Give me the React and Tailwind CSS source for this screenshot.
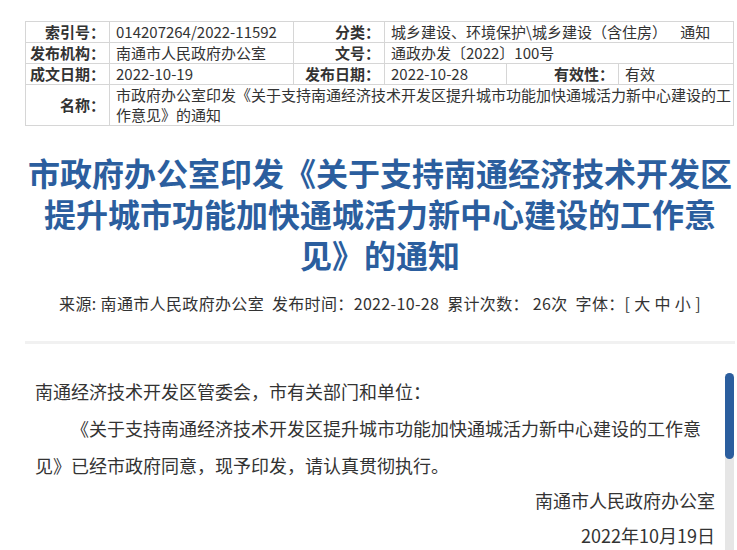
const labelCls = "text-right font-bold pr-[4px] pl-[4px] whitespace-nowrap";
const valueCls = "pl-[6px] pr-[4px]";
const cellBorder = "border border-[#d6d6d6]";

function InfoTable() {
  return (
    <table className="w-[708px] table-fixed border-collapse text-[15px] leading-[20px] text-[#333]">
      <colgroup>
        <col className="w-[84px]" />
        <col className="w-[184px]" />
        <col className="w-[91px]" />
        <col className="w-[122px]" />
        <col className="w-[112px]" />
        <col className="w-[115px]" />
      </colgroup>
      <tbody>
        <tr className="h-[21px]">
          <td className={`${cellBorder} ${labelCls}`}>索引号：</td>
          <td className={`${cellBorder} ${valueCls}`}>014207264/2022-11592</td>
          <td className={`${cellBorder} ${labelCls}`}>分类：</td>
          <td colSpan={3} className={`${cellBorder} ${valueCls} whitespace-nowrap`}>
            城乡建设、环境保护\城乡建设（含住房）&nbsp;&nbsp;&nbsp;&nbsp;通知
          </td>
        </tr>
        <tr className="h-[21px]">
          <td className={`${cellBorder} ${labelCls}`}>发布机构：</td>
          <td className={`${cellBorder} ${valueCls}`}>南通市人民政府办公室</td>
          <td className={`${cellBorder} ${labelCls}`}>文号：</td>
          <td colSpan={3} className={`${cellBorder} ${valueCls}`}>通政办发〔2022〕100号</td>
        </tr>
        <tr className="h-[21px]">
          <td className={`${cellBorder} ${labelCls}`}>成文日期：</td>
          <td className={`${cellBorder} ${valueCls}`}>2022-10-19</td>
          <td className={`${cellBorder} ${labelCls}`}>发布日期：</td>
          <td className={`${cellBorder} ${valueCls}`}>2022-10-28</td>
          <td className={`${cellBorder} ${labelCls}`}>有效性：</td>
          <td className={`${cellBorder} ${valueCls}`}>有效</td>
        </tr>
        <tr className="h-[41px]">
          <td className={`${cellBorder} ${labelCls}`}>名称：</td>
          <td colSpan={5} className={`${cellBorder} pl-[6px] pr-0 align-top`}>
            市政府办公室印发《关于支持南通经济技术开发区提升城市功能加快通城活力新中心建设的工作意见》的通知
          </td>
        </tr>
      </tbody>
    </table>
  );
}

export default function App() {
  return (
    <div className="min-h-screen bg-white pt-[21px] pl-[25px] pr-[2px] font-['Noto_Sans_CJK_SC','Noto_Sans',sans-serif] text-[#333]">
      <InfoTable />

      {/* Title */}
      <h1 className="mt-[26px] text-center text-[32px] leading-[41px] font-bold text-[#2b5e9e]">
        市政府办公室印发《关于支持南通经济技术开发区提升城市功能加快通城活力新中心建设的工作意见》的通知
      </h1>

      {/* Meta */}
      <div className="mt-[16px] text-center text-[16px] leading-[24px] tracking-[0.35px] text-[#333]">
        来源: 南通市人民政府办公室&nbsp;&nbsp;发布时间：2022-10-28&nbsp;&nbsp;累计次数：&nbsp;26次&nbsp;&nbsp;字体：[ 大 中 小 ]
      </div>

      <div className="mt-[26px] h-[3px] bg-[#f1f1f1]" />

      {/* Body */}
      <div className="mt-[29px] flex h-[180px] overflow-hidden">
        <div className="w-[700px] pl-[10px] pr-[10px] text-[18px] leading-[37px] text-[#333]">
          <p>南通经济技术开发区管委会，市有关部门和单位：</p>
          <p className="indent-[36px]">
            《关于支持南通经济技术开发区提升城市功能加快通城活力新中心建设的工作意见》已经市政府同意，现予印发，请认真贯彻执行。
          </p>
          <p className="text-right leading-[33px]">南通市人民政府办公室</p>
          <p className="text-right leading-[37px]">2022年10月19日</p>
        </div>
        <div className="flex w-[9px] flex-col rounded-t-full bg-[#e6e6e6]">
          <div className="h-[86px] rounded-full bg-[#2b5e9e]" />
        </div>
      </div>
    </div>
  );
}
